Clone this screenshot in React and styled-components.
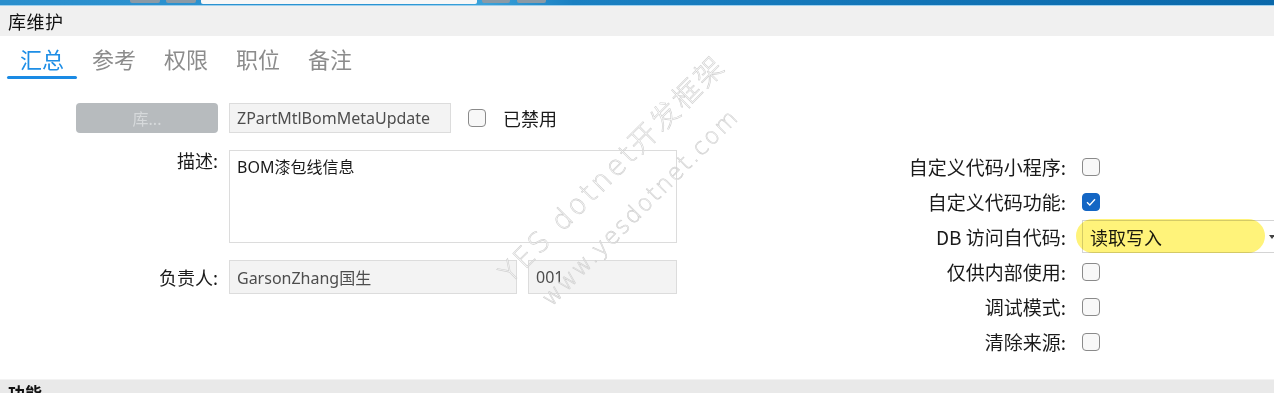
import React from 'react'
import styled, { createGlobalStyle } from 'styled-components'

const GlobalStyle = createGlobalStyle`
  html, body {
    margin: 0;
    padding: 0;
    overflow: hidden;
  }
  body {
    width: 1274px;
    height: 393px;
    background: #ffffff;
    font-family: "Noto Sans", "Noto Sans CJK SC", sans-serif;
    color: #1a1a1a;
  }
`

const Page = styled.div`
  width: 1274px;
  height: 393px;
  display: flex;
  flex-direction: column;
  overflow: hidden;
`

const TopStrip = styled.div`
  height: 5px;
  flex: none;
  display: flex;
  align-items: flex-start;
  background: linear-gradient(90deg, #2b8fcd 0%, #2a94d2 30%, #3aa2da 38%, #1a80c2 45%, #0a68aa 100%);
  border-bottom: 1px solid #9fd0ee;
`

const StripBlock = styled.div`
  height: ${p => (p.$white ? 4 : 3)}px;
  width: ${p => p.$w}px;
  margin-left: ${p => p.$ml}px;
  background: ${p => (p.$white ? '#f7f7f7' : '#8a9aa6')};
  border-radius: 0 0 2px 2px;
`

const TitleBar = styled.div`
  height: 30px;
  flex: none;
  display: flex;
  align-items: center;
  padding-left: 8px;
  background: #f0f0f0;
  font-family: "Noto Sans CJK SC", sans-serif;
  font-size: 18px;
  letter-spacing: 0.5px;
  color: #111;
`

const TabRow = styled.div`
  height: 44px;
  flex: none;
  display: flex;
  padding-left: 7px;
  gap: 2px;
  background: #fff;
`

const Tab = styled.div`
  position: relative;
  padding: 0 13px;
  display: flex;
  align-items: center;
  font-family: "Noto Sans CJK SC", sans-serif;
  font-size: 22px;
  color: ${p => (p.$active ? '#1e8ee6' : '#8c8c8c')};

  &::after {
    content: '';
    display: ${p => (p.$active ? 'block' : 'none')};
    position: absolute;
    left: 0;
    right: 0;
    bottom: 1px;
    height: 3px;
    border-radius: 2px;
    background: #1a8ae4;
  }
`

const Body = styled.div`
  position: relative;
  height: 299px;
  flex: none;
  display: flex;
  align-items: flex-start;
  padding-top: 23px;
  box-sizing: border-box;
`

const LeftForm = styled.div`
  margin-left: 76px;
  width: 601px;
  display: grid;
  grid-template-columns: 142px 1fr;
  grid-template-rows: 30px 93px 34px;
  column-gap: 11px;
  row-gap: 17px;
`

const Label = styled.div`
  justify-self: end;
  align-self: ${p => (p.$top ? 'start' : 'center')};
  font-family: "Noto Sans CJK SC", sans-serif;
  font-size: 18px;
  line-height: 20px;
  color: #1a1a1a;
  white-space: nowrap;
`

const PickButton = styled.button`
  width: 142px;
  height: 30px;
  border: none;
  border-radius: 4px;
  background: #b7bbbe;
  color: #d6d9db;
  font-family: "Noto Sans", "Noto Sans CJK SC", sans-serif;
  font-size: 16px;
  padding: 0;
`

const InlineRow = styled.div`
  display: flex;
  align-items: center;
  gap: ${p => p.$gap || 0}px;
`

const TextBox = styled.div`
  width: ${p => p.$w}px;
  height: ${p => p.$h}px;
  box-sizing: border-box;
  border: 1px solid #dcdcdc;
  background: ${p => (p.$white ? '#fff' : '#f3f3f3')};
  padding: ${p => (p.$multi ? '3px 7px' : '0 7px')};
  display: flex;
  align-items: ${p => (p.$multi ? 'flex-start' : 'center')};
  font-family: "Noto Sans", "Noto Sans CJK SC", sans-serif;
  font-size: 16px;
  color: ${p => (p.$white ? '#1a1a1a' : '#4d4d4d')};
  white-space: nowrap;
  overflow: hidden;
`

const Check = styled.span`
  width: 18px;
  height: 18px;
  box-sizing: border-box;
  border-radius: 4px;
  border: 1.5px solid ${p => (p.$checked ? '#1466c4' : '#8a8a8a')};
  background: ${p => (p.$checked ? '#1466c4' : '#f8f8f8')};
  display: inline-flex;
  align-items: center;
  justify-content: center;
  flex: none;
`

const CheckCell = styled.div`
  display: flex;
  align-items: center;
`

const CheckText = styled.span`
  font-family: "Noto Sans CJK SC", sans-serif;
  font-size: 18px;
  color: #1a1a1a;
`

const RightForm = styled.div`
  margin-left: 189px;
  padding-top: 46px;
  display: grid;
  grid-template-columns: 200px 200px;
  grid-auto-rows: 35px;
  column-gap: 16px;
  align-items: center;
`

const RightLabel = styled.div`
  justify-self: end;
  font-family: "Noto Sans CJK SC", sans-serif;
  font-size: 19px;
  color: #1a1a1a;
  white-space: nowrap;
`

const SelectBox = styled.div`
  position: relative;
  width: 200px;
  height: 33px;
  box-sizing: border-box;
  border: 1px solid #d4d4d4;
  background: #fff;
  display: flex;
  align-items: center;
  padding-left: 7px;
  font-family: "Noto Sans CJK SC", sans-serif;
  font-size: 18px;
  color: #1a1a1a;

  &::after {
    content: '';
    position: absolute;
    right: 6px;
    top: 14px;
    border-left: 3px solid transparent;
    border-right: 3px solid transparent;
    border-top: 4px solid #444;
  }
`

const Highlight = styled.span`
  position: absolute;
  left: -7px;
  top: -2px;
  width: 189px;
  height: 34px;
  border-radius: 17px;
  background: #fff37a;
  mix-blend-mode: multiply;
  pointer-events: none;
`

const Watermark = styled.div`
  position: absolute;
  left: ${p => p.$x}px;
  top: ${p => p.$y}px;
  transform-origin: 0 100%;
  transform: rotate(-45deg);
  font-family: "DejaVu Sans", "Noto Sans CJK SC", sans-serif;
  font-weight: 300;
  font-size: ${p => p.$size}px;
  letter-spacing: ${p => p.$ls}px;
  line-height: 1;
  white-space: nowrap;
  color: rgba(255, 255, 255, 0.6);
  -webkit-text-stroke: 0.6px #cfcfcf;
  pointer-events: none;
`

const BottomStrip = styled.div`
  flex: 1;
  border-top: 1px solid #f3f3f3;
  background: #e9e9e9;
  padding: 3px 0 0 8px;
  overflow: hidden;
  font-family: "Noto Sans CJK SC", sans-serif;
  font-weight: 700;
  font-size: 17px;
  line-height: 20px;
  color: #111;
`

const Tick = () => (
  <svg width="10" height="8" viewBox="0 0 10 8">
    <path d="M1 4.2 L3.8 7 L9 1.2" fill="none" stroke="#fff" strokeWidth="1.3" />
  </svg>
)

const rightRows = [
  { label: '自定义代码小程序:', checked: false },
  { label: '自定义代码功能:', checked: true },
  { label: 'DB 访问自代码:', select: '读取写入' },
  { label: '仅供内部使用:', checked: false },
  { label: '调试模式:', checked: false },
  { label: '清除来源:', checked: false },
]

const tabs = ['汇总', '参考', '权限', '职位', '备注']

export default function App() {
  return (
    <Page>
      <GlobalStyle />
      <TopStrip>
        <StripBlock $ml={130} $w={30} />
        <StripBlock $ml={6} $w={30} />
        <StripBlock $ml={5} $w={276} $white />
        <StripBlock $ml={5} $w={28} />
        <StripBlock $ml={7} $w={29} />
      </TopStrip>
      <TitleBar>库维护</TitleBar>
      <TabRow>
        {tabs.map((t, i) => (
          <Tab key={t} $active={i === 0}>{t}</Tab>
        ))}
      </TabRow>
      <Body>
        <LeftForm>
          <PickButton>库...</PickButton>
          <InlineRow>
            <TextBox $w={222} $h={30}>ZPartMtlBomMetaUpdate</TextBox>
            <Check style={{ marginLeft: 17 }} />
            <CheckText style={{ marginLeft: 17 }}>已禁用</CheckText>
          </InlineRow>

          <Label $top>描述:</Label>
          <TextBox $w={448} $h={93} $white $multi>BOM漆包线信息</TextBox>

          <Label>负责人:</Label>
          <InlineRow $gap={11}>
            <TextBox $w={288} $h={34}>GarsonZhang国生</TextBox>
            <TextBox $w={149} $h={34}>001</TextBox>
          </InlineRow>
        </LeftForm>

        <RightForm>
          {rightRows.map(r => (
            <React.Fragment key={r.label}>
              <RightLabel>{r.label}</RightLabel>
              {r.select ? (
                <SelectBox>
                  {r.select}
                  <Highlight />
                </SelectBox>
              ) : (
                <CheckCell>
                  <Check $checked={r.checked}>{r.checked && <Tick />}</Check>
                </CheckCell>
              )}
            </React.Fragment>
          ))}
        </RightForm>

        <Watermark $x={514} $y={180} $size={28} $ls={3}>YES dotnet开发框架</Watermark>
        <Watermark $x={554} $y={207} $size={23} $ls={2}>www.yesdotnet.com</Watermark>
      </Body>
      <BottomStrip>功能</BottomStrip>
    </Page>
  )
}
